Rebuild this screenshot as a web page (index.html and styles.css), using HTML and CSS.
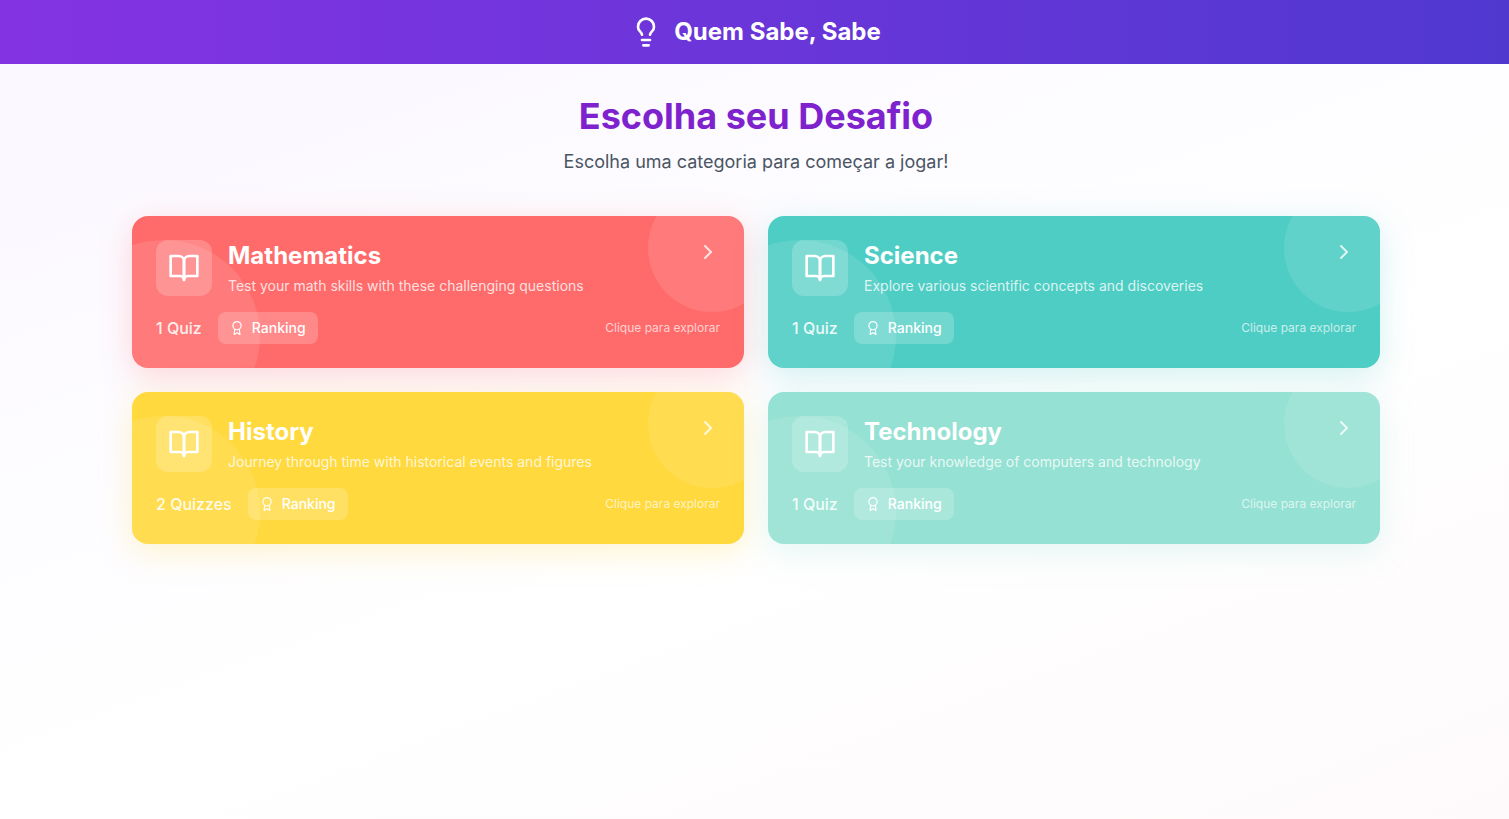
FILE: index.html
```html
<!DOCTYPE html>
<html lang="pt-BR">
<head>
<meta charset="utf-8">
<title>Quem Sabe, Sabe</title>
<link rel="stylesheet" href="styles.css">
</head>
<body>
<svg class="sprite" aria-hidden="true">
  <symbol id="book-open" viewBox="0 0 24 24"><path d="M2 3h6a4 4 0 0 1 4 4v14a3 3 0 0 0-3-3H2z"/><path d="M22 3h-6a4 4 0 0 0-4 4v14a3 3 0 0 1 3-3h7z"/></symbol>
  <symbol id="award" viewBox="0 0 24 24"><circle cx="12" cy="8" r="7"/><path d="M8.210 13.890 7 23l5-3 5 3-1.210-9.120"/></symbol>
  <symbol id="chevron" viewBox="0 0 24 24"><path d="m9 18 6-6-6-6"/></symbol>
</svg>
<header class="site-header">
  <svg class="bulb" viewBox="0 0 24 24" aria-hidden="true"><path d="M15 14c.2-1 .7-1.700 1.500-2.500C17.500 10.600 18 9.400 18 8A6 6 0 0 0 6 8c0 1 .2 2.200 1.500 3.500.7.700 1.300 1.500 1.500 2.500"/><path d="M9 18h6M10 22h4"/></svg>
  <span class="brand">Quem Sabe, Sabe</span>
</header>
<main class="main">
  <div class="container">
    <div class="intro">
      <h1>Escolha seu Desafio</h1>
      <p>Escolha uma categoria para começar a jogar!</p>
    </div>
    <div class="grid">
      <article class="card coral">
        <div class="card-top">
          <span class="tile"><svg class="icon-book" aria-hidden="true"><use href="#book-open"/></svg></span>
          <div class="card-text"><h2>Mathematics</h2><p>Test your math skills with these challenging questions</p></div>
          <a class="go" href="#" aria-label="Mathematics"><svg aria-hidden="true"><use href="#chevron"/></svg></a>
        </div>
        <div class="card-bottom">
          <span class="count">1 Quiz</span>
          <button class="ranking" type="button"><svg aria-hidden="true"><use href="#award"/></svg>Ranking</button>
          <span class="hint">Clique para explorar</span>
        </div>
      </article>
      <article class="card teal">
        <div class="card-top">
          <span class="tile"><svg class="icon-book" aria-hidden="true"><use href="#book-open"/></svg></span>
          <div class="card-text"><h2>Science</h2><p>Explore various scientific concepts and discoveries</p></div>
          <a class="go" href="#" aria-label="Science"><svg aria-hidden="true"><use href="#chevron"/></svg></a>
        </div>
        <div class="card-bottom">
          <span class="count">1 Quiz</span>
          <button class="ranking" type="button"><svg aria-hidden="true"><use href="#award"/></svg>Ranking</button>
          <span class="hint">Clique para explorar</span>
        </div>
      </article>
      <article class="card yellow">
        <div class="card-top">
          <span class="tile"><svg class="icon-book" aria-hidden="true"><use href="#book-open"/></svg></span>
          <div class="card-text"><h2>History</h2><p>Journey through time with historical events and figures</p></div>
          <a class="go" href="#" aria-label="History"><svg aria-hidden="true"><use href="#chevron"/></svg></a>
        </div>
        <div class="card-bottom">
          <span class="count">2 Quizzes</span>
          <button class="ranking" type="button"><svg aria-hidden="true"><use href="#award"/></svg>Ranking</button>
          <span class="hint">Clique para explorar</span>
        </div>
      </article>
      <article class="card mint">
        <div class="card-top">
          <span class="tile"><svg class="icon-book" aria-hidden="true"><use href="#book-open"/></svg></span>
          <div class="card-text"><h2>Technology</h2><p>Test your knowledge of computers and technology</p></div>
          <a class="go" href="#" aria-label="Technology"><svg aria-hidden="true"><use href="#chevron"/></svg></a>
        </div>
        <div class="card-bottom">
          <span class="count">1 Quiz</span>
          <button class="ranking" type="button"><svg aria-hidden="true"><use href="#award"/></svg>Ranking</button>
          <span class="hint">Clique para explorar</span>
        </div>
      </article>
    </div>
  </div>
</main>
</body>
</html>
```
FILE: styles.css
```css
* { box-sizing: border-box; }
body {
  margin: 0;
  min-height: 100vh;
  font-family: Inter, "Liberation Sans", sans-serif;
  background: linear-gradient(160deg, #faf7ff, #ffffff 60%, #fefafb);
}
h1, h2, p { margin: 0; }
svg { fill: none; stroke: currentColor; stroke-width: 2; stroke-linecap: round; stroke-linejoin: round; flex: none; }
.sprite { display: none; }
.site-header {
  display: flex;
  align-items: center;
  justify-content: center;
  gap: 12px;
  height: 64px;
  padding-left: 2px;
  color: #fff;
  background: linear-gradient(90deg, #8433e3, #5038cf);
}
.bulb { width: 32px; height: 32px; }
.brand { font-size: 24px; line-height: 32px; font-weight: 700; }
.main { padding: 32px 16px 32px 19px; }
.container { max-width: 1248px; margin: 0 auto; }
.intro { text-align: center; margin-bottom: 40px; }
.intro h1 { font-size: 36px; line-height: 40px; font-weight: 700; color: #7e22ce; margin-bottom: 12px; }
.intro p { font-size: 18px; line-height: 28px; color: #4b5563; }
.grid { display: grid; grid-template-columns: repeat(auto-fit, minmax(420px, 1fr)); gap: 24px; }
.card {
  position: relative;
  isolation: isolate;
  overflow: hidden;
  padding: 24px;
  border-radius: 16px;
  color: #fff;
}
.card::before, .card::after {
  content: "";
  position: absolute;
  z-index: -1;
  width: 128px;
  height: 128px;
  border-radius: 50%;
  background: rgba(255, 255, 255, 0.1);
}
.card::before { top: -32px; right: -32px; }
.card::after { width: 192px; height: 192px; left: -64px; bottom: -64px; }
.coral { background: #ff6b6b; box-shadow: 0 8px 32px rgba(255, 107, 107, 0.25); }
.teal { background: #4ecdc4; box-shadow: 0 8px 32px rgba(78, 205, 196, 0.25); }
.yellow { background: #ffd93d; box-shadow: 0 8px 32px rgba(255, 217, 61, 0.25); }
.mint { background: #95e1d3; box-shadow: 0 8px 32px rgba(149, 225, 211, 0.25); }
.card-top { display: flex; align-items: flex-start; gap: 16px; margin-bottom: 16px; }
.tile {
  display: flex;
  align-items: center;
  justify-content: center;
  width: 56px;
  height: 56px;
  border-radius: 12px;
  background: rgba(255, 255, 255, 0.2);
}
.icon-book { width: 32px; height: 32px; }
.card-text { flex: 1; }
.card-text h2 { font-size: 24px; line-height: 32px; font-weight: 700; margin-bottom: 4px; }
.card-text p { font-size: 14px; line-height: 20px; color: rgba(255, 255, 255, 0.8); }
.go { display: flex; color: rgba(255, 255, 255, 0.8); }
.go svg { width: 24px; height: 24px; }
.card-bottom { display: flex; align-items: center; gap: 16px; }
.count { font-size: 16px; line-height: 24px; font-weight: 500; color: rgba(255, 255, 255, 0.9); }
.ranking {
  display: flex;
  align-items: center;
  gap: 8px;
  height: 32px;
  padding: 0 12px;
  border: 0;
  border-radius: 8px;
  font: 500 14px/20px Inter, "Liberation Sans", sans-serif;
  color: #fff;
  background: rgba(255, 255, 255, 0.2);
}
.ranking svg { width: 14px; height: 14px; }
.hint { margin-left: auto; font-size: 12px; line-height: 16px; color: rgba(255, 255, 255, 0.7); }
```
